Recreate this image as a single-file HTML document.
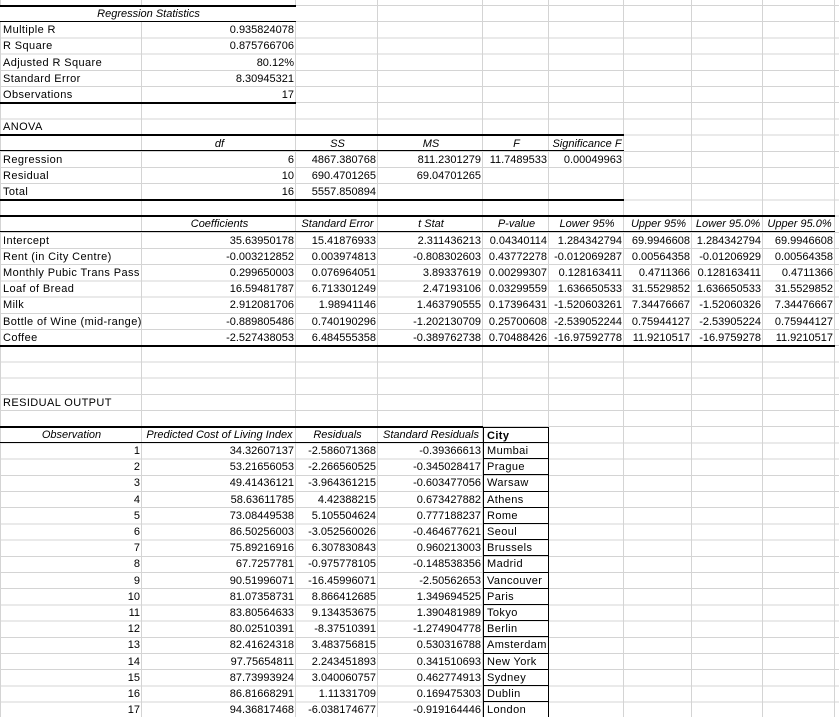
<!DOCTYPE html>
<html><head><meta charset="utf-8"><style>
html,body{margin:0;padding:0;background:#fff;width:839px;height:717px;overflow:hidden;position:relative;font-family:"Liberation Sans",Arial,sans-serif;font-size:11px;color:#000}
.hl{position:absolute;left:0;top:5px;width:839px;height:730px;background:repeating-linear-gradient(to bottom,#d4d4d4 0 1px,transparent 1px 16.2px)}
.vl{position:absolute;top:0;width:1px;height:717px;background:#d4d4d4}
.g{position:absolute;left:0;top:6px;display:grid;grid-template-columns:142px 154px 82px 105px 66px 75px 68px 71px 72px 4px;grid-auto-rows:16.2px;width:839px}
.g div{white-space:nowrap;overflow:hidden;line-height:16px;padding:0 2px 0 3px;box-sizing:border-box}
.g div:not(.r):not(.c){letter-spacing:.4px}
.r{text-align:right}
.c{text-align:center;font-style:italic}
.k{position:absolute;height:2px;background:#000}
.t{position:absolute;height:1px;background:#000}
.city{border:1px solid #000;border-top:none;border-left:1px solid #000}
</style></head><body>
<div class="hl"></div>
<div class="vl" style="left:0"></div>
<div class="vl" style="left:141px"></div>
<div class="vl" style="left:295px"></div>
<div class="vl" style="left:377px"></div>
<div class="vl" style="left:482px"></div>
<div class="vl" style="left:548px"></div>
<div class="vl" style="left:623px"></div>
<div class="vl" style="left:691px"></div>
<div class="vl" style="left:762px"></div>
<div class="vl" style="left:834px"></div>

<div class="g">
<div class="c" style="grid-row:1;grid-column:1/3;background:#fff">Regression Statistics</div>
<div style="grid-row:2;grid-column:1">Multiple R</div><div class="r" style="grid-row:2;grid-column:2">0.935824078</div>
<div style="grid-row:3;grid-column:1">R Square</div><div class="r" style="grid-row:3;grid-column:2">0.875766706</div>
<div style="grid-row:4;grid-column:1">Adjusted R Square</div><div class="r" style="grid-row:4;grid-column:2">80.12%</div>
<div style="grid-row:5;grid-column:1">Standard Error</div><div class="r" style="grid-row:5;grid-column:2">8.30945321</div>
<div style="grid-row:6;grid-column:1">Observations</div><div class="r" style="grid-row:6;grid-column:2">17</div>

<div style="grid-row:8;grid-column:1">ANOVA</div>
<div class="c" style="grid-row:9;grid-column:2">df</div><div class="c" style="grid-row:9;grid-column:3">SS</div><div class="c" style="grid-row:9;grid-column:4">MS</div><div class="c" style="grid-row:9;grid-column:5">F</div><div class="c" style="grid-row:9;grid-column:6">Significance F</div>
<div style="grid-row:10;grid-column:1">Regression</div><div class="r" style="grid-row:10;grid-column:2">6</div><div class="r" style="grid-row:10;grid-column:3">4867.380768</div><div class="r" style="grid-row:10;grid-column:4">811.2301279</div><div class="r" style="grid-row:10;grid-column:5">11.7489533</div><div class="r" style="grid-row:10;grid-column:6">0.00049963</div>
<div style="grid-row:11;grid-column:1">Residual</div><div class="r" style="grid-row:11;grid-column:2">10</div><div class="r" style="grid-row:11;grid-column:3">690.4701265</div><div class="r" style="grid-row:11;grid-column:4">69.04701265</div>
<div style="grid-row:12;grid-column:1">Total</div><div class="r" style="grid-row:12;grid-column:2">16</div><div class="r" style="grid-row:12;grid-column:3">5557.850894</div>

<div class="c" style="grid-row:14;grid-column:2">Coefficients</div><div class="c" style="grid-row:14;grid-column:3">Standard Error</div><div class="c" style="grid-row:14;grid-column:4">t Stat</div><div class="c" style="grid-row:14;grid-column:5">P-value</div><div class="c" style="grid-row:14;grid-column:6">Lower 95%</div><div class="c" style="grid-row:14;grid-column:7">Upper 95%</div><div class="c" style="grid-row:14;grid-column:8">Lower 95.0%</div><div class="c" style="grid-row:14;grid-column:9">Upper 95.0%</div>

<div style="grid-row:15;grid-column:1">Intercept</div><div class="r" style="grid-row:15;grid-column:2">35.63950178</div><div class="r" style="grid-row:15;grid-column:3">15.41876933</div><div class="r" style="grid-row:15;grid-column:4">2.311436213</div><div class="r" style="grid-row:15;grid-column:5">0.04340114</div><div class="r" style="grid-row:15;grid-column:6">1.284342794</div><div class="r" style="grid-row:15;grid-column:7">69.9946608</div><div class="r" style="grid-row:15;grid-column:8">1.284342794</div><div class="r" style="grid-row:15;grid-column:9">69.9946608</div>
<div style="grid-row:16;grid-column:1">Rent (in City Centre)</div><div class="r" style="grid-row:16;grid-column:2">-0.003212852</div><div class="r" style="grid-row:16;grid-column:3">0.003974813</div><div class="r" style="grid-row:16;grid-column:4">-0.808302603</div><div class="r" style="grid-row:16;grid-column:5">0.43772278</div><div class="r" style="grid-row:16;grid-column:6">-0.012069287</div><div class="r" style="grid-row:16;grid-column:7">0.00564358</div><div class="r" style="grid-row:16;grid-column:8">-0.01206929</div><div class="r" style="grid-row:16;grid-column:9">0.00564358</div>
<div style="grid-row:17;grid-column:1">Monthly Pubic Trans Pass</div><div class="r" style="grid-row:17;grid-column:2">0.299650003</div><div class="r" style="grid-row:17;grid-column:3">0.076964051</div><div class="r" style="grid-row:17;grid-column:4">3.89337619</div><div class="r" style="grid-row:17;grid-column:5">0.00299307</div><div class="r" style="grid-row:17;grid-column:6">0.128163411</div><div class="r" style="grid-row:17;grid-column:7">0.4711366</div><div class="r" style="grid-row:17;grid-column:8">0.128163411</div><div class="r" style="grid-row:17;grid-column:9">0.4711366</div>
<div style="grid-row:18;grid-column:1">Loaf of Bread</div><div class="r" style="grid-row:18;grid-column:2">16.59481787</div><div class="r" style="grid-row:18;grid-column:3">6.713301249</div><div class="r" style="grid-row:18;grid-column:4">2.47193106</div><div class="r" style="grid-row:18;grid-column:5">0.03299559</div><div class="r" style="grid-row:18;grid-column:6">1.636650533</div><div class="r" style="grid-row:18;grid-column:7">31.5529852</div><div class="r" style="grid-row:18;grid-column:8">1.636650533</div><div class="r" style="grid-row:18;grid-column:9">31.5529852</div>
<div style="grid-row:19;grid-column:1">Milk</div><div class="r" style="grid-row:19;grid-column:2">2.912081706</div><div class="r" style="grid-row:19;grid-column:3">1.98941146</div><div class="r" style="grid-row:19;grid-column:4">1.463790555</div><div class="r" style="grid-row:19;grid-column:5">0.17396431</div><div class="r" style="grid-row:19;grid-column:6">-1.520603261</div><div class="r" style="grid-row:19;grid-column:7">7.34476667</div><div class="r" style="grid-row:19;grid-column:8">-1.52060326</div><div class="r" style="grid-row:19;grid-column:9">7.34476667</div>
<div style="grid-row:20;grid-column:1">Bottle of Wine (mid-range)</div><div class="r" style="grid-row:20;grid-column:2">-0.889805486</div><div class="r" style="grid-row:20;grid-column:3">0.740190296</div><div class="r" style="grid-row:20;grid-column:4">-1.202130709</div><div class="r" style="grid-row:20;grid-column:5">0.25700608</div><div class="r" style="grid-row:20;grid-column:6">-2.539052244</div><div class="r" style="grid-row:20;grid-column:7">0.75944127</div><div class="r" style="grid-row:20;grid-column:8">-2.53905224</div><div class="r" style="grid-row:20;grid-column:9">0.75944127</div>
<div style="grid-row:21;grid-column:1">Coffee</div><div class="r" style="grid-row:21;grid-column:2">-2.527438053</div><div class="r" style="grid-row:21;grid-column:3">6.484555358</div><div class="r" style="grid-row:21;grid-column:4">-0.389762738</div><div class="r" style="grid-row:21;grid-column:5">0.70488426</div><div class="r" style="grid-row:21;grid-column:6">-16.97592778</div><div class="r" style="grid-row:21;grid-column:7">11.9210517</div><div class="r" style="grid-row:21;grid-column:8">-16.9759278</div><div class="r" style="grid-row:21;grid-column:9">11.9210517</div>

<div style="grid-row:25;grid-column:1">RESIDUAL OUTPUT</div>
<div class="c" style="grid-row:27;grid-column:1">Observation</div><div class="c" style="grid-row:27;grid-column:2">Predicted Cost of Living Index</div><div class="c" style="grid-row:27;grid-column:3">Residuals</div><div class="c" style="grid-row:27;grid-column:4">Standard Residuals</div><div class="city" style="grid-row:27;grid-column:5;font-weight:bold;border-top:1px solid #000">City</div>

<div class="r" style="grid-row:28;grid-column:1">1</div><div class="r" style="grid-row:28;grid-column:2">34.32607137</div><div class="r" style="grid-row:28;grid-column:3">-2.586071368</div><div class="r" style="grid-row:28;grid-column:4">-0.39366613</div><div class="city" style="grid-row:28;grid-column:5">Mumbai</div>
<div class="r" style="grid-row:29;grid-column:1">2</div><div class="r" style="grid-row:29;grid-column:2">53.21656053</div><div class="r" style="grid-row:29;grid-column:3">-2.266560525</div><div class="r" style="grid-row:29;grid-column:4">-0.345028417</div><div class="city" style="grid-row:29;grid-column:5">Prague</div>
<div class="r" style="grid-row:30;grid-column:1">3</div><div class="r" style="grid-row:30;grid-column:2">49.41436121</div><div class="r" style="grid-row:30;grid-column:3">-3.964361215</div><div class="r" style="grid-row:30;grid-column:4">-0.603477056</div><div class="city" style="grid-row:30;grid-column:5">Warsaw</div>
<div class="r" style="grid-row:31;grid-column:1">4</div><div class="r" style="grid-row:31;grid-column:2">58.63611785</div><div class="r" style="grid-row:31;grid-column:3">4.42388215</div><div class="r" style="grid-row:31;grid-column:4">0.673427882</div><div class="city" style="grid-row:31;grid-column:5">Athens</div>
<div class="r" style="grid-row:32;grid-column:1">5</div><div class="r" style="grid-row:32;grid-column:2">73.08449538</div><div class="r" style="grid-row:32;grid-column:3">5.105504624</div><div class="r" style="grid-row:32;grid-column:4">0.777188237</div><div class="city" style="grid-row:32;grid-column:5">Rome</div>
<div class="r" style="grid-row:33;grid-column:1">6</div><div class="r" style="grid-row:33;grid-column:2">86.50256003</div><div class="r" style="grid-row:33;grid-column:3">-3.052560026</div><div class="r" style="grid-row:33;grid-column:4">-0.464677621</div><div class="city" style="grid-row:33;grid-column:5">Seoul</div>
<div class="r" style="grid-row:34;grid-column:1">7</div><div class="r" style="grid-row:34;grid-column:2">75.89216916</div><div class="r" style="grid-row:34;grid-column:3">6.307830843</div><div class="r" style="grid-row:34;grid-column:4">0.960213003</div><div class="city" style="grid-row:34;grid-column:5">Brussels</div>
<div class="r" style="grid-row:35;grid-column:1">8</div><div class="r" style="grid-row:35;grid-column:2">67.7257781</div><div class="r" style="grid-row:35;grid-column:3">-0.975778105</div><div class="r" style="grid-row:35;grid-column:4">-0.148538356</div><div class="city" style="grid-row:35;grid-column:5">Madrid</div>
<div class="r" style="grid-row:36;grid-column:1">9</div><div class="r" style="grid-row:36;grid-column:2">90.51996071</div><div class="r" style="grid-row:36;grid-column:3">-16.45996071</div><div class="r" style="grid-row:36;grid-column:4">-2.50562653</div><div class="city" style="grid-row:36;grid-column:5">Vancouver</div>
<div class="r" style="grid-row:37;grid-column:1">10</div><div class="r" style="grid-row:37;grid-column:2">81.07358731</div><div class="r" style="grid-row:37;grid-column:3">8.866412685</div><div class="r" style="grid-row:37;grid-column:4">1.349694525</div><div class="city" style="grid-row:37;grid-column:5">Paris</div>
<div class="r" style="grid-row:38;grid-column:1">11</div><div class="r" style="grid-row:38;grid-column:2">83.80564633</div><div class="r" style="grid-row:38;grid-column:3">9.134353675</div><div class="r" style="grid-row:38;grid-column:4">1.390481989</div><div class="city" style="grid-row:38;grid-column:5">Tokyo</div>
<div class="r" style="grid-row:39;grid-column:1">12</div><div class="r" style="grid-row:39;grid-column:2">80.02510391</div><div class="r" style="grid-row:39;grid-column:3">-8.37510391</div><div class="r" style="grid-row:39;grid-column:4">-1.274904778</div><div class="city" style="grid-row:39;grid-column:5">Berlin</div>
<div class="r" style="grid-row:40;grid-column:1">13</div><div class="r" style="grid-row:40;grid-column:2">82.41624318</div><div class="r" style="grid-row:40;grid-column:3">3.483756815</div><div class="r" style="grid-row:40;grid-column:4">0.530316788</div><div class="city" style="grid-row:40;grid-column:5">Amsterdam</div>
<div class="r" style="grid-row:41;grid-column:1">14</div><div class="r" style="grid-row:41;grid-column:2">97.75654811</div><div class="r" style="grid-row:41;grid-column:3">2.243451893</div><div class="r" style="grid-row:41;grid-column:4">0.341510693</div><div class="city" style="grid-row:41;grid-column:5">New York</div>
<div class="r" style="grid-row:42;grid-column:1">15</div><div class="r" style="grid-row:42;grid-column:2">87.73993924</div><div class="r" style="grid-row:42;grid-column:3">3.040060757</div><div class="r" style="grid-row:42;grid-column:4">0.462774913</div><div class="city" style="grid-row:42;grid-column:5">Sydney</div>
<div class="r" style="grid-row:43;grid-column:1">16</div><div class="r" style="grid-row:43;grid-column:2">86.81668291</div><div class="r" style="grid-row:43;grid-column:3">1.11331709</div><div class="r" style="grid-row:43;grid-column:4">0.169475303</div><div class="city" style="grid-row:43;grid-column:5">Dublin</div>
<div class="r" style="grid-row:44;grid-column:1">17</div><div class="r" style="grid-row:44;grid-column:2">94.36817468</div><div class="r" style="grid-row:44;grid-column:3">-6.038174677</div><div class="r" style="grid-row:44;grid-column:4">-0.919164446</div><div class="city" style="grid-row:44;grid-column:5">London</div>
</div>

<div class="k" style="left:0;width:296px;top:5px"></div>
<div class="t" style="left:0;width:296px;top:21px"></div>
<div class="k" style="left:0;width:296px;top:102px"></div>
<div class="k" style="left:0;width:624px;top:134px"></div>
<div class="t" style="left:0;width:624px;top:150px"></div>
<div class="k" style="left:0;width:624px;top:199px"></div>
<div class="k" style="left:0;width:835px;top:215px"></div>
<div class="t" style="left:0;width:835px;top:231px"></div>
<div class="k" style="left:0;width:835px;top:345px"></div>
<div class="k" style="left:0;width:483px;top:426px"></div>
<div class="t" style="left:0;width:483px;top:442px"></div>
</body></html>
